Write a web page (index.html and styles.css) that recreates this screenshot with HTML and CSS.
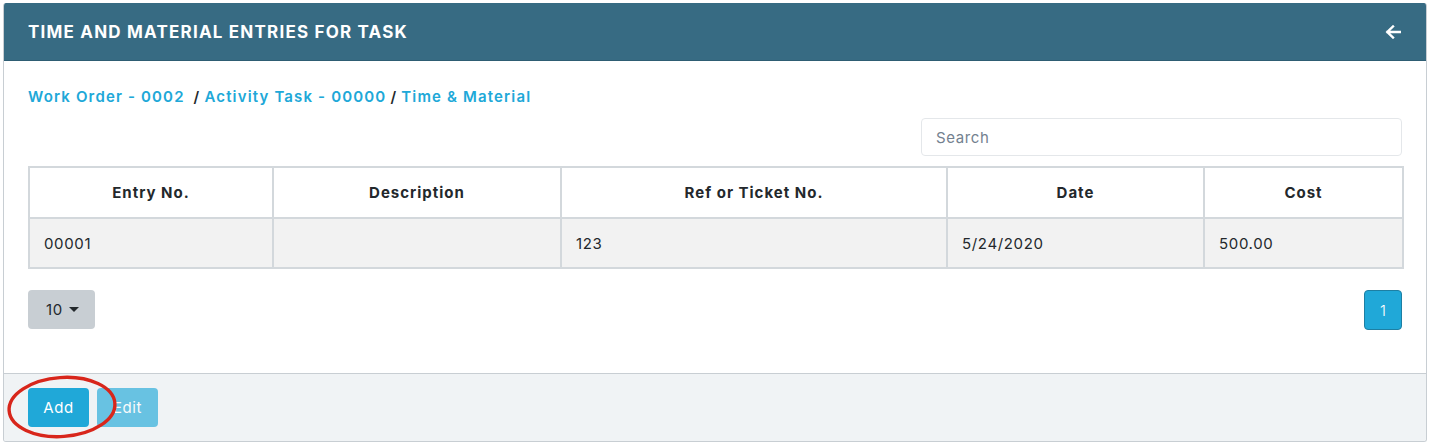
FILE: index.html
```html
<!DOCTYPE html>
<html lang="en">
<head>
<meta charset="utf-8">
<title>Time and Material Entries</title>
<link rel="stylesheet" href="styles.css">
</head>
<body>
<div class="card">
  <div class="card-header">
    <h1 class="card-title">TIME AND MATERIAL ENTRIES FOR TASK</h1>
    <svg class="back-icon" width="16" height="14" viewBox="0 0 16 14" aria-hidden="true">
      <path d="M15 7H2.5M8 1.5L2.3 7L8 12.5" fill="none" stroke="#fff" stroke-width="2.4" stroke-linecap="square"/>
    </svg>
  </div>
  <div class="card-body">
    <nav class="crumbs">
      <a class="crumb">Work Order - 0002</a>&nbsp;<span class="sep">/</span><a class="crumb">Activity Task - 00000</a><span class="sep">/</span><a class="crumb">Time &amp; Material</a>
    </nav>
    <div class="search-row">
      <input class="search" type="text" placeholder="Search">
    </div>
    <table class="grid">
      <colgroup>
        <col class="c1"><col class="c2"><col class="c3"><col class="c4"><col class="c5">
      </colgroup>
      <thead>
        <tr><th>Entry No.</th><th>Description</th><th>Ref or Ticket No.</th><th>Date</th><th>Cost</th></tr>
      </thead>
      <tbody>
        <tr><td>00001</td><td></td><td>123</td><td>5/24/2020</td><td>500.00</td></tr>
      </tbody>
    </table>
    <div class="pager-row">
      <button class="size-btn">10 <span class="caret"></span></button>
      <button class="page-btn">1</button>
    </div>
  </div>
  <div class="card-footer">
    <button class="btn btn-add">Add</button>
    <button class="btn btn-edit" disabled>Edit</button>
    <svg class="mark" width="116" height="68" viewBox="0 0 116 68" aria-hidden="true">
      <ellipse cx="57" cy="33" rx="53" ry="29.5" fill="none" stroke="#d8261b" stroke-width="3.4" transform="rotate(-4 57 33)"/>
    </svg>
  </div>
</div>
</body>
</html>
```
FILE: styles.css
```css
* { box-sizing: border-box; }
html, body { margin: 0; padding: 0; background: #fff; }
body {
  font-family: Inter, "Noto Sans", "Liberation Sans", sans-serif;
  color: #23282c;
  padding: 3px 2px 0 3px;
}
.card {
  width: 1424px;
  border: 1px solid #c8ced3;
  border-top: 0;
  border-radius: 3px;
  background: #fff;
  overflow: hidden;
}
.card-header {
  height: 58px;
  background: #376b83;
  display: flex;
  align-items: center;
  justify-content: space-between;
  padding: 0 24px 0 24px;
  border-bottom: 1px solid #2e5d73;
}
.card-title {
  margin: 0;
  color: #fff;
  font-size: 17px;
  font-weight: 700;
  letter-spacing: 1.2px;
}
.back-icon { margin-right: 1px; margin-top: 1px; }
.card-body {
  padding: 24px 24px 43px 24px;
}
.crumbs {
  line-height: 22px;
  font-size: 15px;
  font-weight: 600;
  letter-spacing: 1.15px;
  color: #20a8d8;
  padding-top: 1px;
  height: 22px;
}
.crumb { color: #20a8d8; text-decoration: none; }
.sep { color: #23282c; margin: 0 4px 0 4px; font-weight: 600; }
.search-row {
  display: flex;
  justify-content: flex-end;
  margin-top: 11px;
}
.search {
  width: 481px;
  height: 38px;
  border: 1px solid #e4e7ea;
  border-radius: 4px;
  padding: 0 14px;
  font: inherit;
  font-size: 15px;
  letter-spacing: 0.6px;
  color: #5c6873;
  outline: none;
}
.search::placeholder { color: #73818f; }
.grid {
  margin-top: 10px;
  width: 1374px;
  border-collapse: collapse;
  table-layout: fixed;
  font-size: 15px;
  letter-spacing: 0.65px;
}
.c1 { width: 244px; }
.c2 { width: 288px; }
.c3 { width: 386px; }
.c4 { width: 257px; }
.c5 { width: 199px; }
.grid th, .grid td {
  border: 2px solid #d3d8dc;
}
.grid th {
  height: 51px;
  font-weight: 700;
  letter-spacing: 1px;
  text-align: center;
  padding: 0 15px;
}
.grid td {
  height: 50px;
  background: #f2f2f2;
  padding: 0 14px;
  text-align: left;
}
.pager-row {
  display: flex;
  justify-content: space-between;
  align-items: flex-start;
  margin-top: 21px;
}
.size-btn {
  width: 67px;
  height: 39px;
  background: #c8ced3;
  border: 0;
  border-radius: 4px;
  font: inherit;
  font-size: 15px;
  letter-spacing: 0.6px;
  color: #23282c;
  display: flex;
  align-items: center;
  justify-content: center;
  gap: 6px;
  padding: 0 0 0 2px;
}
.caret {
  width: 0; height: 0;
  border-left: 5px solid transparent;
  border-right: 5px solid transparent;
  border-top: 5px solid #23282c;
}
.page-btn {
  width: 38px;
  height: 40px;
  background: #20a8d8;
  border: 1px solid #1d7fa3;
  border-radius: 4px;
  color: #fff;
  font: inherit;
  font-size: 15px;
  font-weight: 300;
  padding: 0;
}
.card-footer {
  position: relative;
  background: #f0f3f5;
  border-top: 1px solid #c8ced3;
  padding: 14px 24px 14px 24px;
  display: flex;
  gap: 8px;
}
.btn {
  height: 39px;
  border: 0;
  border-radius: 4px;
  font: inherit;
  font-size: 15px;
  letter-spacing: 0.6px;
  color: #fff;
  padding: 0;
}
.btn-add { width: 61px; background: #20a8d8; }
.btn-edit { width: 61px; background: #20a8d8; opacity: 0.65; }
.mark {
  position: absolute;
  left: 1px;
  top: 0px;
  pointer-events: none;
}
```
